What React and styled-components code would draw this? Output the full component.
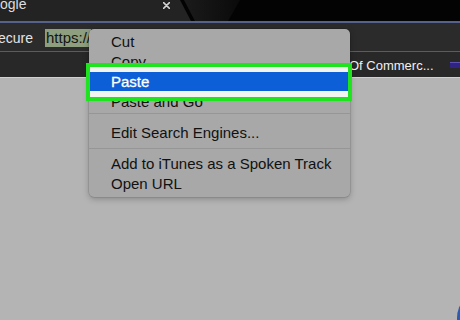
import React from "react";
import styled, { createGlobalStyle } from "styled-components";

const Global = createGlobalStyle`
  html, body { margin: 0; padding: 0; background: #b4b4b4; }
  body { font-family: "Liberation Sans", Arial, sans-serif; }
`;

const Screen = styled.div`
  position: relative;
  width: 460px;
  height: 320px;
  overflow: hidden;
  display: flex;
  flex-direction: column;
  background: #b4b4b4;
  font-family: "Liberation Sans", Arial, sans-serif;
`;

const TabStrip = styled.div`
  height: 21px;
  flex-shrink: 0;
  display: flex;
  background: #030303;
`;

const ActiveTab = styled.div`
  width: 191px;
  box-sizing: border-box;
  padding-right: 21px;
  display: flex;
  justify-content: space-between;
  align-items: flex-start;
  background: #232323;
  clip-path: polygon(0 0, 180px 0, 191px 100%, 0 100%);
`;

const TabTitle = styled.span`
  font-size: 14px;
  line-height: 12px;
  margin-top: -2px;
  color: #dedede;
  white-space: nowrap;
`;

const TabClose = styled.svg`
  margin-top: 2px;
  flex-shrink: 0;
`;

const InactiveTab = styled.div`
  width: 56px;
  margin-left: -7px;
  background: linear-gradient(90deg, #1b1b1b, #0a0a0a);
  clip-path: polygon(0 0, 100% 0, calc(100% - 12px) 100%, 11px 100%);
`;

const AccentLine = styled.div`
  height: 2px;
  flex-shrink: 0;
  background: #56628c;
`;

const Toolbar = styled.div`
  height: 28px;
  flex-shrink: 0;
  box-sizing: border-box;
  padding-top: 6px;
  display: flex;
  align-items: flex-start;
  background: #2b2b2b;
`;

const SecurityLabel = styled.span`
  width: 47px;
  margin-left: -2px;
  font-size: 14px;
  line-height: 18px;
  color: #e4e4e4;
  white-space: nowrap;
`;

const UrlSelection = styled.span`
  padding-left: 1px;
  font-size: 15px;
  line-height: 18px;
  color: #141414;
  background: #8e9f80;
  white-space: nowrap;
`;

const ToolbarRule = styled.div`
  height: 1px;
  flex-shrink: 0;
  background: #4a5d8a;
`;

const BookmarksBar = styled.div`
  height: 25px;
  flex-shrink: 0;
  box-sizing: border-box;
  padding: 6px 0 0 349px;
  display: flex;
  align-items: flex-start;
  background: #282828;
`;

const Bookmark = styled.span`
  font-size: 13px;
  line-height: 15px;
  color: #f0f0f0;
  white-space: nowrap;
`;

const BookmarkIcon = styled.span`
  width: 12px;
  height: 6px;
  margin: 4px 0 0 16px;
  flex-shrink: 0;
  box-sizing: border-box;
  background: #2f2484;
  border-top: 1px solid #5d52b4;
`;

const PageRule = styled.div`
  height: 1px;
  flex-shrink: 0;
  background: #d0d0d0;
`;

const Page = styled.div`
  flex: 1;
  background: #b4b4b4;
`;

const FloatingButton = styled.div`
  position: absolute;
  left: 457px;
  top: 290px;
  width: 56px;
  height: 56px;
  border-radius: 50%;
  background: #2b5cb3;
`;

const Menu = styled.div`
  position: absolute;
  left: 89px;
  top: 29px;
  width: 261px;
  padding: 3px 0;
  border-radius: 5px;
  background: #a8a8a8;
  box-shadow: 0 2px 6px rgba(0, 0, 0, 0.25), 0 0 0 0.5px rgba(0, 0, 0, 0.15);
`;

const MenuItem = styled.div`
  height: 20px;
  line-height: 20px;
  padding-left: 22px;
  font-size: 15px;
  white-space: nowrap;
  color: ${(p) => (p.$active ? "#ffffff" : "#111111")};
  background: ${(p) => (p.$active ? "#0c5fd6" : "transparent")};
  -webkit-text-stroke: ${(p) => (p.$active ? "0.3px #ffffff" : "0")};
`;

const Separator = styled.div`
  height: 11px;
  position: relative;
  &::before {
    content: "";
    position: absolute;
    left: 0;
    right: 0;
    top: ${(p) => p.$lineAt}px;
    height: 1px;
    background: #969696;
  }
`;

const Annotation = styled.div`
  position: absolute;
  left: 86px;
  top: 63px;
  width: 266px;
  height: 38px;
  box-sizing: border-box;
  border: 4px solid #1fe31f;
  box-shadow: inset 0 5px 0 #f2f4f2, inset 0 -6px 0 #f2f4f2;
`;

export default function App() {
  return (
    <>
      <Global />
      <Screen>
        <TabStrip>
          <ActiveTab>
            <TabTitle>ogle</TabTitle>
            <TabClose width="7" height="7" viewBox="0 0 7 7">
              <path d="M0.6 0.6 L6.4 6.4 M6.4 0.6 L0.6 6.4" stroke="#d2d2d2" strokeWidth="1.5" strokeLinecap="round" />
            </TabClose>
          </ActiveTab>
          <InactiveTab />
        </TabStrip>
        <AccentLine />
        <Toolbar>
          <SecurityLabel>ecure</SecurityLabel>
          <UrlSelection>https://</UrlSelection>
        </Toolbar>
        <ToolbarRule />
        <BookmarksBar>
          <Bookmark>Of Commerc...</Bookmark>
          <BookmarkIcon />
        </BookmarksBar>
        <PageRule />
        <Page />
        <FloatingButton />
        <Menu>
          <MenuItem>Cut</MenuItem>
          <MenuItem>Copy</MenuItem>
          <MenuItem $active>Paste</MenuItem>
          <MenuItem>Paste and Go</MenuItem>
          <Separator $lineAt={1} />
          <MenuItem>Edit Search Engines...</MenuItem>
          <Separator $lineAt={5} />
          <MenuItem>Add to iTunes as a Spoken Track</MenuItem>
          <MenuItem>Open URL</MenuItem>
        </Menu>
        <Annotation />
      </Screen>
    </>
  );
}
